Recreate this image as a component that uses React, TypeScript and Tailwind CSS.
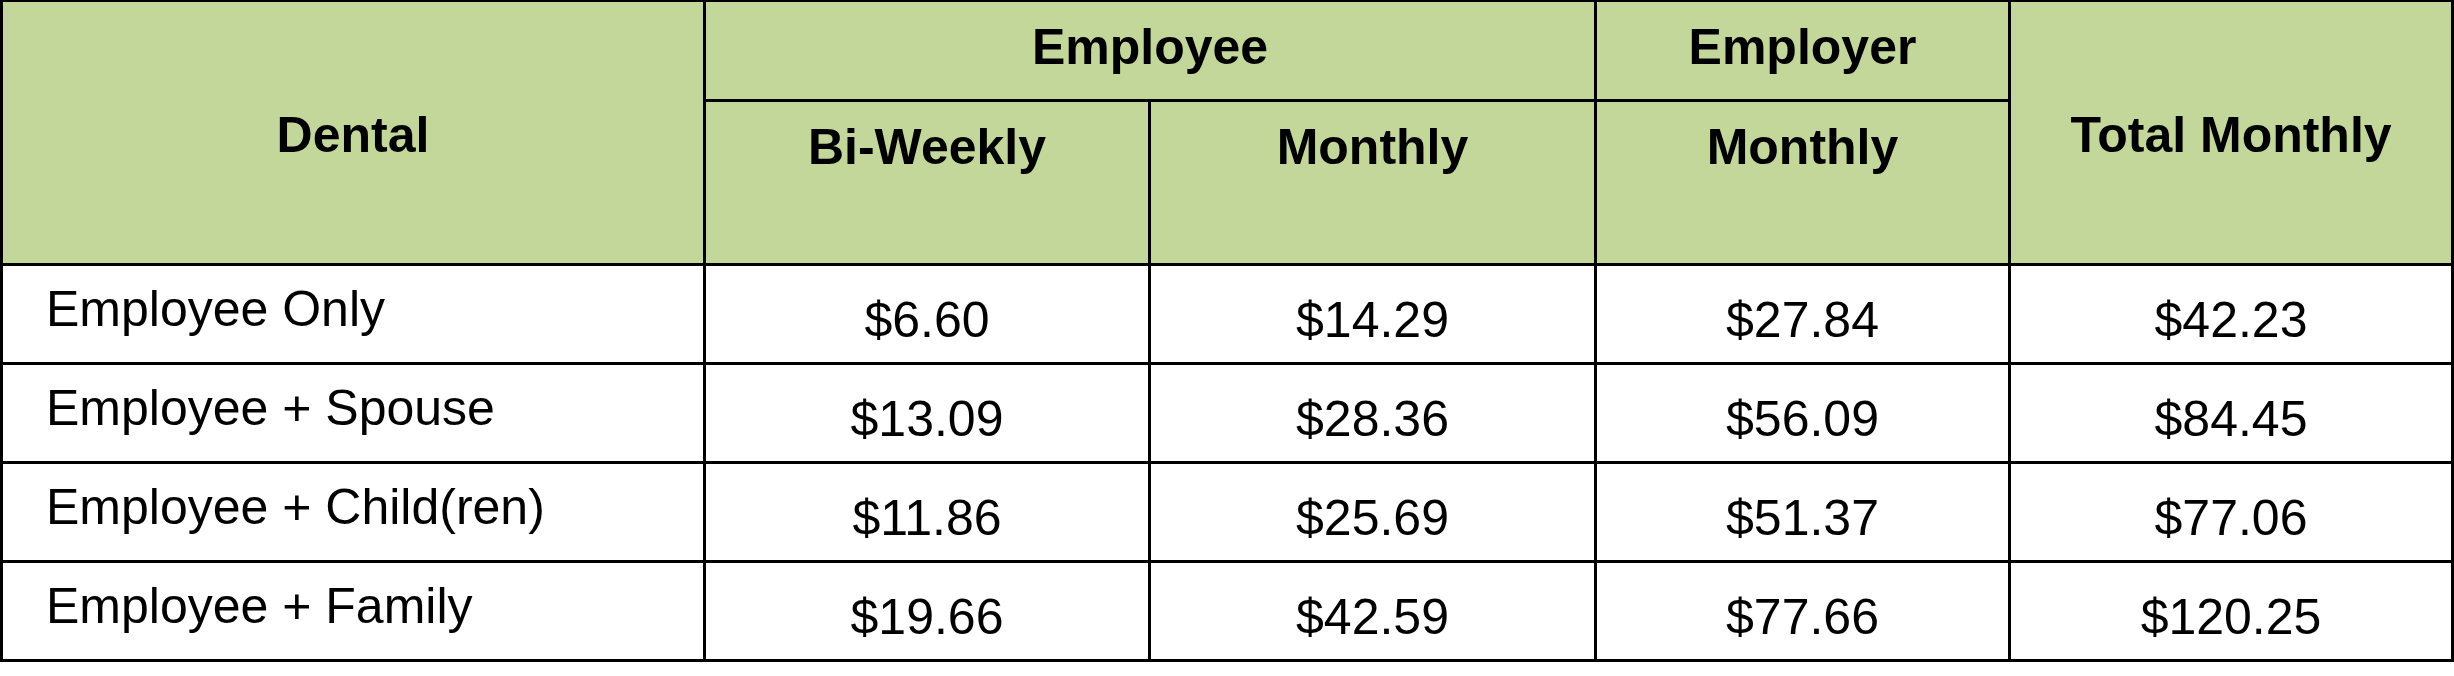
const rows = [
  { label: "Employee Only", values: ["$6.60", "$14.29", "$27.84", "$42.23"] },
  { label: "Employee + Spouse", values: ["$13.09", "$28.36", "$56.09", "$84.45"] },
  { label: "Employee + Child(ren)", values: ["$11.86", "$25.69", "$51.37", "$77.06"] },
  { label: "Employee + Family", values: ["$19.66", "$42.59", "$77.66", "$120.25"] },
];

export default function App() {
  return (
    <main className="min-h-screen bg-white text-black font-['Liberation_Sans',Arial,sans-serif]">
      <div className="grid w-[2454px] grid-cols-[700px_442px_443px_411px_440px] grid-rows-[97px_161px_96px_96px_96px_96px] gap-[3px] bg-black pt-[2px] px-[3px] pb-[3px] text-[50px] leading-[1.15]">
        <div className="row-span-2 flex items-center justify-center bg-[#c4d79b] pt-[7px] font-bold">
          Dental
        </div>
        <div className="col-span-2 flex items-center justify-center bg-[#c4d79b] pb-[5px] font-bold">
          Employee
        </div>
        <div className="flex items-center justify-center bg-[#c4d79b] pb-[5px] font-bold">
          Employer
        </div>
        <div className="row-span-2 flex items-center justify-center bg-[#c4d79b] pt-[7px] font-bold">
          Total Monthly
        </div>
        <div className="flex justify-center bg-[#c4d79b] pt-[17px] font-bold">Bi-Weekly</div>
        <div className="flex justify-center bg-[#c4d79b] pt-[17px] font-bold">Monthly</div>
        <div className="flex justify-center bg-[#c4d79b] pt-[17px] font-bold">Monthly</div>

        {rows.map((row) => (
          <div key={row.label} className="contents">
            <div className="flex items-center bg-white pl-[43px] pb-[8px]">{row.label}</div>
            {row.values.map((v, i) => (
              <div key={i} className="flex items-center justify-center bg-white pt-[14px]">
                {v}
              </div>
            ))}
          </div>
        ))}
      </div>
    </main>
  );
}
